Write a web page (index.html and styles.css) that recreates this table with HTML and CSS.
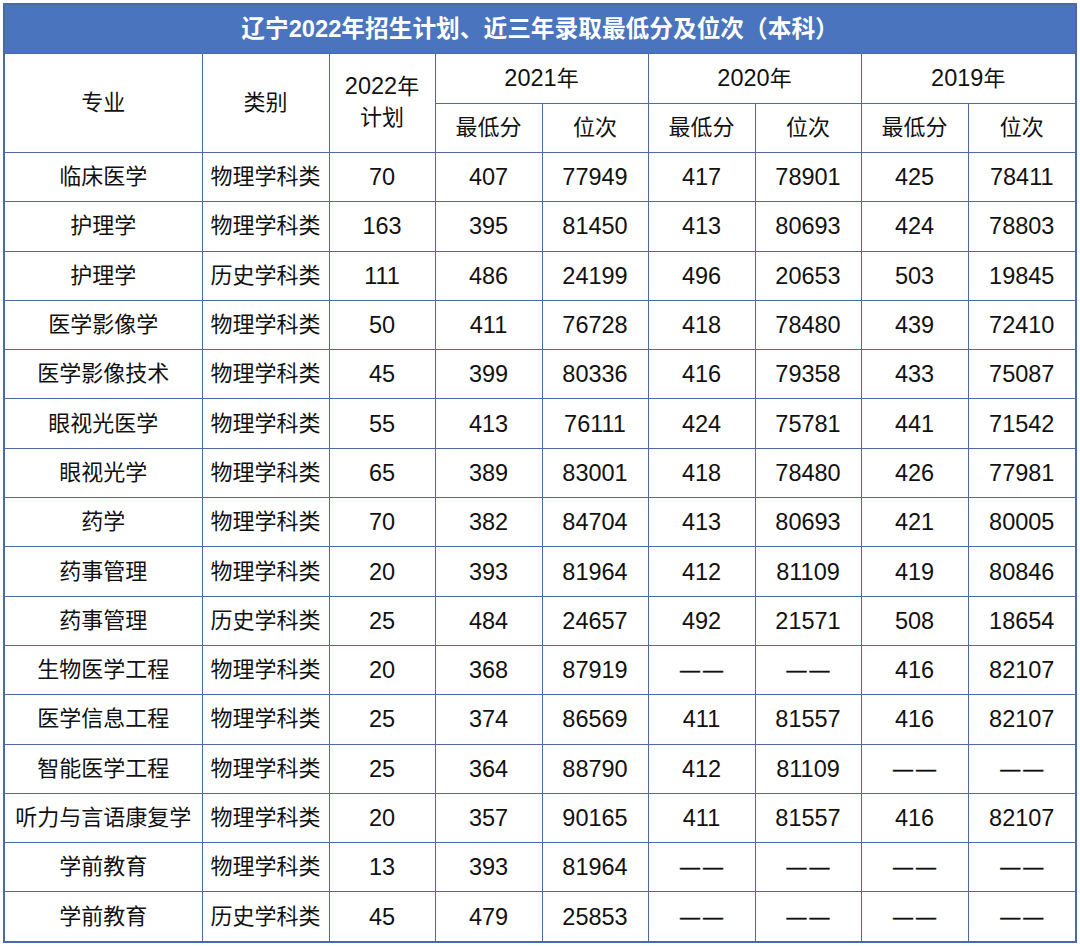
FILE: index.html
```html
<!DOCTYPE html>
<html lang="zh-CN">
<head>
<meta charset="utf-8">
<title>辽宁2022年招生计划</title>
<link rel="stylesheet" href="styles.css">
</head>
<body>
<table class="plan">
<colgroup>
<col class="c-major"><col class="c-type"><col class="c-plan">
<col class="c-a"><col class="c-b"><col class="c-a"><col class="c-b"><col class="c-a"><col class="c-last">
</colgroup>
<thead>
<tr class="title-row"><th colspan="9">辽宁2022年招生计划、近三年录取最低分及位次（本科）</th></tr>
<tr class="h-row"><th rowspan="2">专业</th><th rowspan="2">类别</th><th rowspan="2" class="two-line"><span class="num">2022</span>年<br>计划</th><th colspan="2"><span class="num">2021</span>年</th><th colspan="2"><span class="num">2020</span>年</th><th colspan="2"><span class="num">2019</span>年</th></tr>
<tr class="h-row"><th>最低分</th><th>位次</th><th>最低分</th><th>位次</th><th>最低分</th><th>位次</th></tr>
</thead>
<tbody>
<tr><td>临床医学</td><td>物理学科类</td><td>70</td><td>407</td><td>77949</td><td>417</td><td>78901</td><td>425</td><td>78411</td></tr>
<tr><td>护理学</td><td>物理学科类</td><td>163</td><td>395</td><td>81450</td><td>413</td><td>80693</td><td>424</td><td>78803</td></tr>
<tr><td>护理学</td><td>历史学科类</td><td>111</td><td>486</td><td>24199</td><td>496</td><td>20653</td><td>503</td><td>19845</td></tr>
<tr><td>医学影像学</td><td>物理学科类</td><td>50</td><td>411</td><td>76728</td><td>418</td><td>78480</td><td>439</td><td>72410</td></tr>
<tr><td>医学影像技术</td><td>物理学科类</td><td>45</td><td>399</td><td>80336</td><td>416</td><td>79358</td><td>433</td><td>75087</td></tr>
<tr><td>眼视光医学</td><td>物理学科类</td><td>55</td><td>413</td><td>76111</td><td>424</td><td>75781</td><td>441</td><td>71542</td></tr>
<tr><td>眼视光学</td><td>物理学科类</td><td>65</td><td>389</td><td>83001</td><td>418</td><td>78480</td><td>426</td><td>77981</td></tr>
<tr><td>药学</td><td>物理学科类</td><td>70</td><td>382</td><td>84704</td><td>413</td><td>80693</td><td>421</td><td>80005</td></tr>
<tr><td>药事管理</td><td>物理学科类</td><td>20</td><td>393</td><td>81964</td><td>412</td><td>81109</td><td>419</td><td>80846</td></tr>
<tr><td>药事管理</td><td>历史学科类</td><td>25</td><td>484</td><td>24657</td><td>492</td><td>21571</td><td>508</td><td>18654</td></tr>
<tr><td>生物医学工程</td><td>物理学科类</td><td>20</td><td>368</td><td>87919</td><td class="dash">——</td><td class="dash">——</td><td>416</td><td>82107</td></tr>
<tr><td>医学信息工程</td><td>物理学科类</td><td>25</td><td>374</td><td>86569</td><td>411</td><td>81557</td><td>416</td><td>82107</td></tr>
<tr><td>智能医学工程</td><td>物理学科类</td><td>25</td><td>364</td><td>88790</td><td>412</td><td>81109</td><td class="dash">——</td><td class="dash">——</td></tr>
<tr><td>听力与言语康复学</td><td>物理学科类</td><td>20</td><td>357</td><td>90165</td><td>411</td><td>81557</td><td>416</td><td>82107</td></tr>
<tr><td>学前教育</td><td>物理学科类</td><td>13</td><td>393</td><td>81964</td><td class="dash">——</td><td class="dash">——</td><td class="dash">——</td><td class="dash">——</td></tr>
<tr><td>学前教育</td><td>历史学科类</td><td>45</td><td>479</td><td>25853</td><td class="dash">——</td><td class="dash">——</td><td class="dash">——</td><td class="dash">——</td></tr>
</tbody>
</table>
</body>
</html>
```

FILE: styles.css
```css
html, body {
  margin: 0;
  padding: 0;
  background: #ffffff;
}
body {
  padding: 3px 0 0 3px;
  font-family: "Liberation Sans", "Noto Sans CJK SC", sans-serif;
  color: #111111;
}
.plan {
  border-collapse: collapse;
  table-layout: fixed;
  width: 1074px;
  border: 2px solid #4a69a6;
}
.c-major { width: 198px; }
.c-type { width: 127px; }
.c-plan { width: 106px; }
.c-a { width: 107px; }
.c-b { width: 106px; }
.c-last { width: 108px; }
.plan th, .plan td {
  border: 1px solid #4a69a6;
  padding: 0;
  text-align: center;
  vertical-align: middle;
  font-size: 22px;
  font-weight: normal;
  height: 48.3px;
  line-height: 26px;
}
.plan tbody td:nth-child(n+3) {
  font-size: 23.5px;
}
.num {
  font-size: 23.5px;
}
.title-row th {
  background: #4a74bd;
  color: #ffffff;
  font-weight: bold;
  font-size: 23.7px;
  height: 48px;
}
.plan .h-row th {
  height: 48.5px;
}
.plan .two-line {
  line-height: 31px;
  padding-bottom: 2px;
}
.plan tbody td.dash {
  font-size: 20px;
  letter-spacing: 3px;
  padding-left: 3px;
  -webkit-text-stroke: 0.4px #111111;
}
```
